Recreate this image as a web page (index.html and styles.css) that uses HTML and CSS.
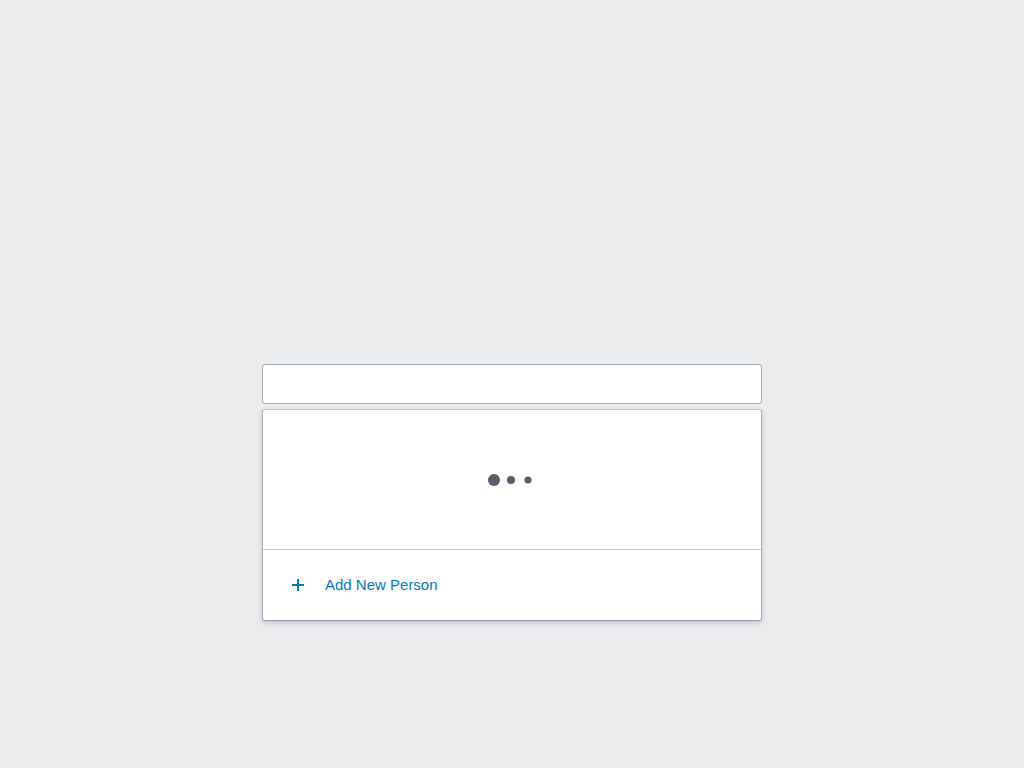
FILE: index.html
```html
<!DOCTYPE html>
<html lang="en">
<head>
<meta charset="utf-8">
<meta name="viewport" content="width=device-width, initial-scale=1">
<title>People</title>
<link rel="stylesheet" href="styles.css">
</head>
<body>
<main class="page">
  <div class="picker">
    <input class="picker-input" type="text" aria-label="Search people">
    <div class="picker-menu">
      <div class="loader" role="status" aria-label="Loading">
        <svg class="loader-dots" viewBox="0 0 48 16" aria-hidden="true">
          <circle cx="6" cy="8" r="6"/>
          <circle cx="23" cy="8" r="4"/>
          <circle cx="40" cy="8" r="3.6"/>
        </svg>
      </div>
      <button class="add-button" type="button">
        <svg class="add-icon" viewBox="0 0 12 12" aria-hidden="true">
          <path d="M5 0h2v5h5v2H7v5H5V7H0V5h5z"/>
        </svg>
        <span>Add New Person</span>
      </button>
    </div>
  </div>
</main>
</body>
</html>
```
FILE: styles.css
```css
*,
*::before,
*::after {
  box-sizing: border-box;
}

body {
  margin: 0;
  background: #ebecee;
  font-family: "Liberation Sans", Arial, sans-serif;
  font-size: 15px;
  line-height: 20px;
}

.page {
  display: flex;
  align-items: center;
  justify-content: center;
  min-height: 100vh;
}

.picker {
  position: relative;
  width: 100%;
  max-width: 500px;
}

.picker-input {
  display: block;
  width: 100%;
  height: 40px;
  padding: 8px 12px;
  border: 1px solid #a3a9b0;
  border-radius: 3px;
  background: #fff;
  font: inherit;
  outline: 0;
}

.picker-menu {
  position: absolute;
  top: 100%;
  left: 0;
  right: 0;
  margin-top: 5px;
  border: 1px solid #a6adb3;
  border-top-color: #b9bec3;
  border-bottom-color: #939ba4;
  border-radius: 3px;
  background: #fff;
  box-shadow: 0 2px 5px rgba(60, 80, 100, 0.25);
}

.loader {
  display: flex;
  align-items: center;
  justify-content: center;
  height: 140px;
  border-bottom: 1px solid #c8cacc;
}

.loader-dots {
  width: 48px;
  height: 16px;
  fill: #575f6d;
}

.add-button {
  display: flex;
  align-items: center;
  gap: 21px;
  width: 100%;
  padding: 25px 29px;
  border: 0;
  border-radius: 3px;
  background: transparent;
  color: #0077c5;
  font: inherit;
  cursor: pointer;
}

.add-icon {
  width: 12px;
  height: 12px;
  fill: currentColor;
}
```
